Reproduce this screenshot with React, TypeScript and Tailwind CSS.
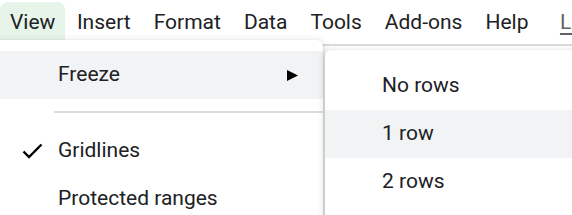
export default function App() {
  const menus = ["Insert", "Format", "Data", "Tools", "Add-ons", "Help"];

  return (
    <div className="relative h-[215px] w-[572px] overflow-hidden bg-white font-['Roboto',sans-serif] text-[#202124]">
      {/* Menu bar */}
      <div className="flex h-[46px] items-start whitespace-nowrap border-b-2 border-[#dadce0] pt-[2px] text-[21px] leading-[40px]">
        <div className="shrink-0 rounded-t-[8px] bg-[#e6f4ea] px-[10px]">View</div>
        {menus.map((m) => (
          <div key={m} className="shrink-0 px-[11.5px]">
            {m}
          </div>
        ))}
        <div className="ml-[20px] shrink-0 text-[#5f6368] underline decoration-[#5f6368] underline-offset-4">Last edit</div>
      </div>

      {/* View menu */}
      <div className="absolute left-[-20px] top-[40px] h-[200px] w-[343px] rounded-[6px] bg-white pt-[11px] text-[21px] shadow-[0_2px_6px_2px_rgba(60,64,67,0.15),0_1px_2px_rgba(60,64,67,0.3)]">
        <div className="flex h-[48px] items-center bg-[#f1f3f4] pl-[78px] pr-[25px]">
          <span className="flex-1">Freeze</span>
          <svg width="11" height="11" viewBox="0 0 10 10">
            <path d="M0 0 L10 5 L0 10 Z" fill="#000" />
          </svg>
        </div>
        <div className="ml-[74px] mb-[14px] mt-[12px] h-[2px] bg-[#dadce0]" />
        <div className="flex h-[48px] items-center">
          <div className="flex w-[78px] justify-end pr-[15px]">
            <svg width="21" height="16" viewBox="0 0 21 16" fill="none">
              <path d="M1.5 8.5 L7 14 L19.5 1.5" stroke="#000" strokeWidth="2.4" />
            </svg>
          </div>
          <span>Gridlines</span>
        </div>
        <div className="flex h-[48px] items-center pl-[78px]">Protected ranges</div>
      </div>

      {/* Freeze submenu */}
      <div className="absolute left-[325px] top-[50px] h-[200px] w-[280px] rounded-[6px] bg-white pt-[12px] text-[21px] shadow-[0_2px_6px_2px_rgba(60,64,67,0.15),0_1px_2px_rgba(60,64,67,0.3)]">
        <div className="flex h-[48px] items-center pl-[57px]">No rows</div>
        <div className="flex h-[48px] items-center bg-[#f1f3f4] pl-[57px]">1 row</div>
        <div className="flex h-[48px] items-center pl-[57px]">2 rows</div>
      </div>
    </div>
  );
}
